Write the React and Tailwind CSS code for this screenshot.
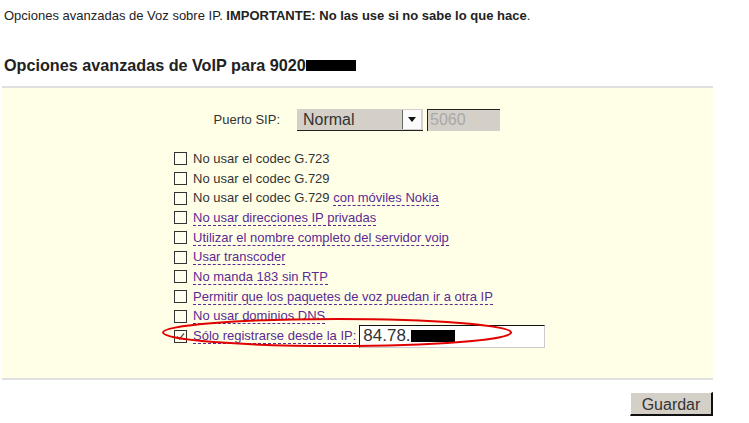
import React from 'react';

const plain = ['No usar el codec G.723', 'No usar el codec G.729'];

const links = [
  'No usar direcciones IP privadas',
  'Utilizar el nombre completo del servidor voip',
  'Usar transcoder',
  'No manda 183 sin RTP',
  'Permitir que los paquetes de voz puedan ir a otra IP',
  'No usar dominios DNS',
];

function Box({ checked }) {
  return (
    <span className="w-[13px] h-[13px] border border-[#333] bg-[#fffff0] flex items-center justify-center shrink-0 mr-[6px]">
      {checked && (
        <svg width="9" height="9" viewBox="0 0 9 9">
          <path d="M1 4.5 L3.5 7 L8 1.5" stroke="#555" strokeWidth="1.2" fill="none" />
        </svg>
      )}
    </span>
  );
}

function Dashed({ children }) {
  return (
    <span className="text-[#5b2a94] border-b border-dashed border-[#5b2a94] leading-[15px]">{children}</span>
  );
}

export default function App() {
  return (
    <div className="min-h-screen bg-white text-[#222] font-['Liberation_Sans',Arial,sans-serif]">
      {/* Intro */}
      <p className="pl-[4px] pt-[8px] text-[13px] leading-[15px]">
        Opciones avanzadas de Voz sobre IP. <b>IMPORTANTE: No las use si no sabe lo que hace</b>.
      </p>

      {/* Heading */}
      <h2 className="pl-[4px] mt-[33px] text-[16.2px] font-bold leading-[18px] flex items-center">
        Opciones avanzadas de VoIP para 9020
        <span className="inline-block w-[50px] h-[11px] bg-black"></span>
      </h2>

      {/* Panel */}
      <div className="ml-[2px] w-[711px] mt-[12px] h-[294px] bg-[#ffffe8] border-t-2 border-b-2 border-[#e0e0e0] text-[13px] text-[#333]">
        <div className="flex items-center mt-[21px] h-[22px]">
          <span className="w-[295px] text-right pr-[17px]">Puerto SIP:</span>
          <div className="w-[126px] h-[22px] bg-[#d4d0c8] border-b border-[#222] flex items-center text-[16px] text-[#333]">
            <span className="pl-[6px] flex-1">Normal</span>
            <span className="w-[19px] h-[19px] border-l border-[#666] bg-[#fafafa] flex items-center justify-center mr-[2px]">
              <svg width="8" height="5" viewBox="0 0 8 5">
                <path d="M0 0 H8 L4 5 Z" fill="#111" />
              </svg>
            </span>
          </div>
          <div className="ml-[4px] w-[73px] h-[22px] bg-[#d4d0c8] border-t border-l border-[#222] text-[16px] text-[#a8a8a8] pl-[2px] leading-[20px]">
            5060
          </div>
        </div>

        <div className="relative mt-[18px] ml-[172px]">
          {plain.map((t) => (
            <div key={t} className="flex items-center h-[19.7px]">
              <Box />
              <span>{t}</span>
            </div>
          ))}
          <div className="flex items-center h-[19.7px]">
            <Box />
            <span>No usar el codec G.729&nbsp;</span>
            <Dashed>con móviles Nokia</Dashed>
          </div>
          {links.map((t) => (
            <div key={t} className="flex items-center h-[19.7px]">
              <Box />
              <Dashed>{t}</Dashed>
            </div>
          ))}
          <div className="flex items-center h-[19.7px]">
            <Box checked />
            <Dashed>Sólo registrarse desde la IP:</Dashed>
            <div className="ml-[3px] w-[186px] h-[23px] bg-white border-t border-l border-[#111] border-r border-b border-r-[#ccc] border-b-[#ccc] flex items-center text-[17px] text-[#333] pl-[3px]">
              84.78.
              <span className="inline-block w-[44px] h-[12px] bg-black"></span>
            </div>
          </div>

          {/* red annotation ellipse */}
          <svg className="absolute left-[-13px] top-[168px] pointer-events-none" width="352" height="31" viewBox="0 0 352 31">
            <ellipse cx="176" cy="15.5" rx="174" ry="13.5" stroke="#e00000" strokeWidth="2" fill="none" />
          </svg>
        </div>
      </div>

      {/* Save */}
      <div className="w-[713px] flex justify-end mt-[12px]">
        <button className="w-[83px] h-[24px] bg-[#d4d0c8] border-t border-l border-white border-r-2 border-b-2 border-r-[#111] border-b-[#111] text-[16px] text-[#333]">
          Guardar
        </button>
      </div>
    </div>
  );
}
